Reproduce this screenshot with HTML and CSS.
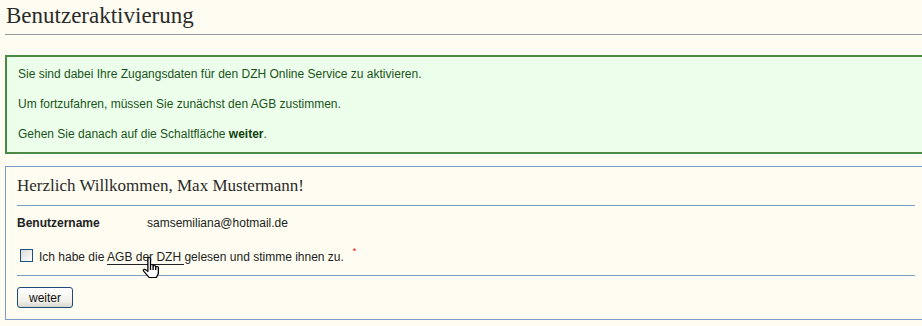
FILE: index.html
```html
<!DOCTYPE html>
<html lang="de">
<head>
    <meta charset="UTF-8">
    <title>Benutzeraktivierung</title>
    <link rel="stylesheet" href="styles.css">
</head>
<body>
    <div class="page">
        <h1>Benutzeraktivierung</h1>

        <div class="notice">
            <p>Sie sind dabei Ihre Zugangsdaten für den DZH Online Service zu aktivieren.</p>
            <p>Um fortzufahren, müssen Sie zunächst den AGB zustimmen.</p>
            <p>Gehen Sie danach auf die Schaltfläche <b>weiter</b>.</p>
        </div>

        <form class="panel" onsubmit="return false;">
            <h2>Herzlich Willkommen, Max Mustermann!</h2>

            <div class="field">
                <div class="field-label">Benutzername</div>
                <div class="field-value">samsemiliana@hotmail.de</div>
            </div>

            <div class="agree">
                <input type="checkbox" id="agb">
                <label for="agb">Ich habe die <a href="#" class="agb-link">AGB der DZH
                    <svg class="cursor" width="17" height="21" viewBox="0 0 13 21" preserveAspectRatio="none">
                        <path d="M4.5 1.5 Q4.5 0.5 5.5 0.5 Q6.5 0.5 6.5 1.5 V8.5 Q6.5 7.5 7.5 7.5 Q8.5 7.5 8.5 8.5 V9.5 Q8.5 8.5 9.5 8.5 Q10.5 8.5 10.5 9.5 V10.5 Q10.5 9.5 11.5 9.5 Q12.5 9.5 12.5 10.5 V16.5 L11 20.5 H5.5 L1.5 14.5 Q0.5 13 1.5 12.5 Q2.5 12 3.5 13.5 L4.5 14.5 Z" fill="#fff" stroke="#000" stroke-width="1" stroke-linejoin="round"/>
                        <path d="M6.5 8.5 V13 M8.5 9.5 V13 M10.5 10.5 V13" stroke="#000" stroke-width="1" fill="none"/>
                    </svg></a> gelesen und stimme ihnen zu.</label>
                <sup class="required">*</sup>
            </div>

            <div class="actions">
                <button type="submit" class="btn">weiter</button>
            </div>
        </form>
    </div>
</body>
</html>
```

FILE: styles.css
```css
html, body {
    margin: 0;
    padding: 0;
    overflow: hidden;
}
body {
    background-color: #fffdf1;
    font-family: "Liberation Sans", Arial, sans-serif;
    font-size: 12px;
    color: #222;
}
.page {
    width: 922px;
    padding-left: 5px;
}
h1 {
    margin: 0;
    padding: 1px 0 3px 1px;
    font-family: "Liberation Serif", "Times New Roman", serif;
    font-size: 23px;
    font-weight: normal;
    line-height: 30px;
    color: #2a2a2a;
    border-bottom: 1px solid #999;
}
.notice {
    margin-top: 20px;
    padding: 10px 11px;
    background-color: #ebffea;
    border: 2px solid #4b8a45;
    color: #1c521c;
}
.notice p {
    margin: 0 0 15px;
    line-height: 15px;
}
.notice p:last-child {
    margin-bottom: 0;
}
.notice b {
    color: #0f400f;
}
.panel {
    margin: 12px 0 0;
    padding: 0 11px 11px;
    border: 1px solid #7b9ec6;
}
.panel h2 {
    margin: 0;
    padding: 9px 0;
    font-family: "Liberation Serif", "Times New Roman", serif;
    font-size: 17px;
    font-weight: normal;
    line-height: 20px;
    color: #2a2a2a;
    border-bottom: 1px solid #7b9ec6;
}
.field {
    display: flex;
    margin-top: 10px;
    line-height: 15px;
}
.field-label {
    width: 130px;
    font-weight: bold;
}
.agree {
    display: flex;
    align-items: flex-start;
    margin-top: 19px;
    padding-bottom: 10px;
    line-height: 15px;
    border-bottom: 1px solid #7b9ec6;
}
.agree input {
    -webkit-appearance: none;
    appearance: none;
    width: 13px;
    height: 13px;
    margin: -1px 6px 0 3px;
    border: 1px solid #1c5180;
    background: linear-gradient(135deg, #dcdcd5, #fff);
}
.agb-link {
    position: relative;
    color: #222;
    text-decoration: none;
    border-bottom: 1px solid #222;
}
.cursor {
    position: absolute;
    left: 35px;
    top: 7px;
}
.required {
    margin: -3px 0 0 9px;
    font-size: 9px;
    line-height: 9px;
    color: #e00;
}
.actions {
    margin-top: 11px;
}
.btn {
    width: 56px;
    height: 21px;
    padding: 0;
    font-family: "Liberation Sans", Arial, sans-serif;
    font-size: 12px;
    color: #111;
    background: linear-gradient(#ffffff, #f1f0ea 70%, #d8d6cc);
    border: 1px solid #1f4b78;
    border-radius: 3px;
    cursor: pointer;
}
```
